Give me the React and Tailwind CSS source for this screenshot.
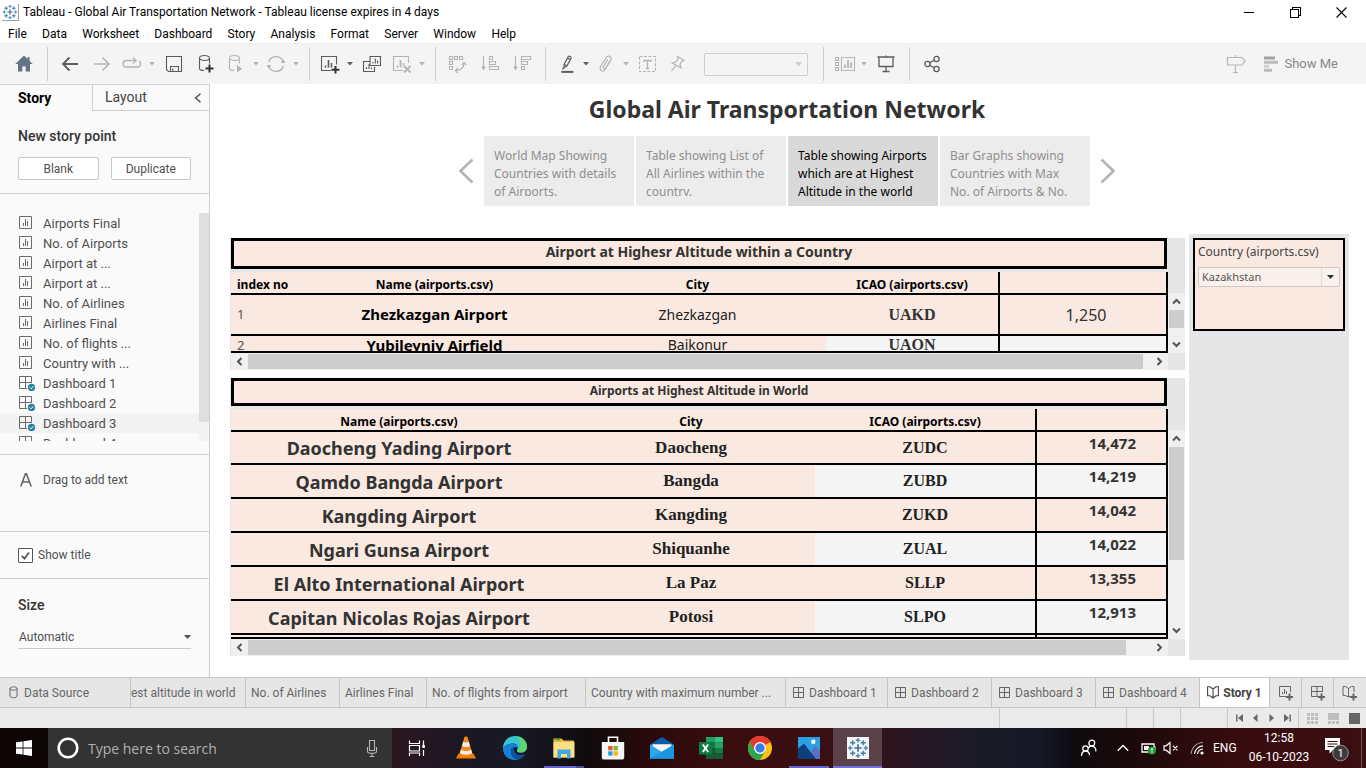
import React from "react";

const UI = "font-['Open_Sans','Noto_Sans',sans-serif]";
const BODY = "font-['Roboto','Noto_Sans',sans-serif]";
const VIZ = "font-['Noto_Sans',sans-serif]";
const SERIF = "font-['Liberation_Serif',serif]";

function Svg({ w = 20, h = 20, children, className = "" }) {
  return (
    <svg width={w} height={h} viewBox={`0 0 ${w} ${h}`} fill="none" stroke="currentColor" className={`block shrink-0 ${className}`} aria-hidden="true">
      {children}
    </svg>
  );
}

/* ---------- window chrome ---------- */

function TableauMark({ size = 16 }) {
  const plus = (x, y, r, c, w) => <path d={`M${x - r} ${y}H${x + r}M${x} ${y - r}V${y + r}`} stroke={c} strokeWidth={w} />;
  return (
    <svg width={size} height={size} viewBox="0 0 24 24" fill="none" aria-hidden="true" className="block shrink-0">
      {plus(12, 12, 4, "#3a6f95", 1.8)}
      {plus(12, 3.5, 2.4, "#4d86ad", 1.5)}
      {plus(12, 20.5, 2.4, "#4d86ad", 1.5)}
      {plus(3.5, 12, 2.4, "#4d86ad", 1.5)}
      {plus(20.5, 12, 2.4, "#4d86ad", 1.5)}
      {plus(6.3, 6.3, 2.8, "#3f7ba3", 1.5)}
      {plus(17.7, 6.3, 2.8, "#3f7ba3", 1.5)}
      {plus(6.3, 17.7, 2.8, "#3f7ba3", 1.5)}
      {plus(17.7, 17.7, 2.8, "#3f7ba3", 1.5)}
    </svg>
  );
}

function TitleBar() {
  const btn = "flex h-5 w-[46px] items-center justify-center text-black";
  return (
    <header className={`flex h-6 items-center bg-white pl-0.5 ${BODY}`}>
      <span className="border-r border-b border-gray-400"><TableauMark /></span>
      <h1 className="ml-1 flex-1 text-[12px] leading-6 text-black">Tableau - Global Air Transportation Network - Tableau license expires in 4 days</h1>
      <div className="mr-0.5 flex">
        <button className={btn} aria-label="Minimize"><Svg w={11} h={11}><path d="M0 5.5H10" shapeRendering="crispEdges" /></Svg></button>
        <button className={btn} aria-label="Restore"><Svg w={11} h={11}><path d="M.5 2.5H8.5V10.5H.5ZM2.5 2.5V.5H10.5V8.5H8.5" shapeRendering="crispEdges" /></Svg></button>
        <button className={btn} aria-label="Close"><Svg w={11} h={11}><path d="M.5 .5L10.5 10.5M10.5 .5L.5 10.5" strokeWidth="1.1" /></Svg></button>
      </div>
    </header>
  );
}

const menus = ["File", "Data", "Worksheet", "Dashboard", "Story", "Analysis", "Format", "Server", "Window", "Help"];

function MenuBar() {
  return (
    <nav className={`h-[19px] bg-white px-2 ${BODY}`}>
      <div className="flex max-w-[508px] justify-between">
        {menus.map((m) => (
          <button key={m} className="text-[12px] leading-5 text-black">{m}</button>
        ))}
      </div>
    </nav>
  );
}

/* ---------- toolbar ---------- */

const dark = "text-[#5c5c5c]";
const dim = "text-[#b4b4b4]";

function Tool({ label, width = "w-8", tone = dim, children }) {
  return <button aria-label={label} className={`flex h-8 items-center justify-center ${width} ${tone}`}>{children}</button>;
}

function Caret({ tone = dim, label }) {
  return (
    <button aria-label={label} className={`flex h-8 w-3 items-center justify-center ${tone}`}>
      <Svg w={6} h={4}><path d="M0 0H6L3 3.6Z" fill="currentColor" stroke="none" /></Svg>
    </button>
  );
}

function Group({ children, pad = "pl-1.5 pr-[7px]" }) {
  return <div className={`flex h-[34px] items-center border-l border-[#d0d0d0] ${pad}`}>{children}</div>;
}

const cylinder = "M3.5 4V14.5C3.5 16 6 16.5 8 16.5M3.5 4C3.5 2.6 5.7 1.5 8.5 1.5S13.5 2.6 13.5 4 11.3 6.5 8.5 6.5 3.5 5.4 3.5 4ZM13.5 4V9.5";

function Toolbar() {
  return (
    <div role="toolbar" className="flex h-[41px] items-center border-t border-[#ececec] bg-[#f4f4f4]">
      <button aria-label="Home" className="flex w-[47px] justify-center text-[#667385]">
        <Svg><path d="M10 1.6L1.2 10H4V17.6H8.3V12.4H11.7V17.6H16V10H18.8L15.6 7V3H13.6V5Z" fill="currentColor" stroke="none" /></Svg>
      </button>
      <Group>
        <Tool label="Undo" tone={dark}><Svg><path d="M18 10H2.5M9.5 3.5L3 10L9.5 16.5" strokeWidth="1.8" /></Svg></Tool>
        <Tool label="Redo"><Svg><path d="M2 10H17.5M10.5 3.5L17 10L10.5 16.5" strokeWidth="1.6" /></Svg></Tool>
        <Tool label="Replay" width="w-7"><Svg><path d="M13 6.5H4C2 6.5 1 8 1 9.7S2 13 4 13H15.5C17.5 13 18.6 11.8 18.6 10C18.6 8.5 18 7.5 17 7M11 3.5L14 6.5L11 9.5" strokeWidth="1.4" /></Svg></Tool>
        <Caret label="Replay options" />
        <Tool label="Save" tone={dark}><Svg><path d="M2.5 2.5H17.5V17.5H4.5L2.5 15.5ZM6.5 17.5V12.5H14.5V17.5M8.8 17V14.5" strokeWidth="1.1" /></Svg></Tool>
        <Tool label="New Data Source" tone={dark}><Svg><path d={cylinder} strokeWidth="1.1" /><path d="M13.5 10.5V18.5M9.5 14.5H17.5" stroke="#333" strokeWidth="2" /></Svg></Tool>
        <Tool label="Pause Auto Updates" width="w-7"><Svg><path d={cylinder} strokeWidth="1.1" /><path d="M11 11L16 14.8L11 18.6Z" fill="currentColor" stroke="none" /></Svg></Tool>
        <Caret label="Update options" />
        <Tool label="Run Update" width="w-7"><Svg><path d="M2.6 8C3.5 4.8 6.5 2.6 10 2.6C13 2.6 15.6 4.2 17 7M17.4 12C16.5 15.2 13.5 17.4 10 17.4C7 17.4 4.4 15.8 3 13" strokeWidth="1.3" /><path d="M14.5 9H19.5L17.5 5.5ZM.5 11H5.5L2.6 14.5Z" fill="currentColor" stroke="none" /></Svg></Tool>
        <Caret label="Run options" />
      </Group>
      <Group>
        <Tool label="New Worksheet" width="w-7" tone={dark}><Svg><path d="M11 16.5H1.5V2.5H16.5V10.5" strokeWidth="1.1" /><path d="M5.5 13.5V11.5M8.5 13.5V6M11.5 13.5V9" strokeWidth="1.6" /><path d="M15.5 12V19.5M11.5 15.7H19.5" stroke="#333" strokeWidth="2" /></Svg></Tool>
        <Caret label="New sheet options" tone={dark} />
        <Tool label="Duplicate" tone={dark}><Svg><path d="M8.5 7.5H1.5V17.5H12.5V13" strokeWidth="1.1" /><path d="M8 2.5H18.5V11.5H8Z" strokeWidth="1.1" /><path d="M11 9.5V8M13.3 9.5V4.5M15.6 9.5V6.5M4.5 15V13M7 15V10M9.5 15V13.5" strokeWidth="1.1" /></Svg></Tool>
        <Tool label="Clear Sheet" width="w-7"><Svg><path d="M11 16.5H1.5V2.5H16.5V9" strokeWidth="1.1" /><path d="M5.5 13.5V11.5M8.5 13.5V6M11.5 11.5V9" strokeWidth="1.7" /><path d="M12 12L18.5 18.5M18.5 12L12 18.5" strokeWidth="1.8" /></Svg></Tool>
        <Caret label="Clear options" />
      </Group>
      <Group>
        <Tool label="Swap Rows and Columns"><Svg><path d="M1.5 2.5H4.5V5.5H1.5ZM6.5 2.5H9.5V5.5H6.5ZM11.5 2.5H14.5V5.5H11.5ZM1.5 7.5H4.5V10.5H1.5ZM1.5 12.5H4.5V15.5H1.5ZM7.5 16.5C12 16.5 16 14 16 9.5M13.5 11L16 8.5L18.5 11M9.8 14L7.3 16.5L9.8 19" strokeWidth="1.1" /></Svg></Tool>
        <Tool label="Sort Ascending"><Svg><path d="M3.5 2V14M9.5 2.5H12.5V5.5H9.5ZM9.5 7.5H15.5V10.5H9.5ZM9.5 12.5H18.5V15.5H9.5Z" strokeWidth="1.1" /><path d="M1 12.5H6L3.5 16.5Z" fill="currentColor" stroke="none" /></Svg></Tool>
        <Tool label="Sort Descending"><Svg><path d="M3.5 2V14M9.5 2.5H18.5V5.5H9.5ZM9.5 7.5H15.5V10.5H9.5ZM9.5 12.5H12.5V15.5H9.5Z" strokeWidth="1.1" /><path d="M1 12.5H6L3.5 16.5Z" fill="currentColor" stroke="none" /></Svg></Tool>
      </Group>
      <Group pad="pl-1.5 pr-[15px]">
        <Tool label="Highlight" width="w-7" tone={dark}><Svg><path d="M8.2 10.2L12.4 2.4C13 1.6 15.6 3 15.2 4L11 11.9L7.6 14.2ZM8.2 10.2L11 11.9M11.6 4L14.4 5.6M6.2 15.4L7.6 14.2" strokeWidth="1.2" /><path d="M5.4 17.9H17.4" strokeWidth="2" /></Svg></Tool>
        <Caret label="Highlight options" tone={dark} />
        <Tool label="Group Members" width="w-7"><Svg><path d="M13.8 7L9.5 14.5C8.5 16.6 7 17.6 5.4 16.8C3.8 16 3.8 14 4.8 12.2L9.8 4C11 2 12.8 1.8 14 2.6C15.5 3.5 15.5 5 14.4 7L10.2 13.8C9.4 15 8.6 15.2 7.8 14.8C7 14.3 7 13.4 7.6 12.4L11.8 5.4" strokeWidth="1.2" /></Svg></Tool>
        <Caret label="Group options" />
        <Tool label="Show Mark Labels"><Svg><path d="M1.5 2.5H17.5V17.5H1.5Z" strokeDasharray="3 1.5" strokeWidth="1.1" /><path d="M6 8V6.5H13V8M9.5 6.5V14.5M8 14.5H11" strokeWidth="1.3" /></Svg></Tool>
        <Tool label="Fix Axes" width="w-7"><Svg><path d="M9.5 2.5L16 6.3L13.6 7.2L12 10.2L13 14L4.2 9L8.2 7.8L10 4.9ZM8 11.4L3.5 16.8" strokeWidth="1.2" /></Svg></Tool>
        <label className="ml-3 flex w-[104px] items-center rounded-xs border border-[#cfcfcf] text-[#cfcfcf]">
          <span className="sr-only">Fit</span>
          <select disabled className="h-[21px] w-full appearance-none bg-transparent" />
          <Svg w={7} h={5} className="mr-[5px]"><path d="M0 0H7L3.5 4.5Z" fill="currentColor" stroke="none" /></Svg>
        </label>
      </Group>
      <Group pad="pl-2 pr-[7px]">
        <Tool label="Show or Hide Cards" width="w-[26px]"><Svg><path d="M.5 3.5H3.5V6.5H.5ZM.5 8.5H3.5V11.5H.5ZM.5 13.5H3.5V16.5H.5ZM6.5 3.5H19.5V16.5H6.5Z" strokeWidth="1.1" /><path d="M10 14V10.5M13 14V6M16 14V8.5" strokeWidth="1.8" /></Svg></Tool>
        <Caret label="Card options" />
        <Tool label="Presentation Mode" tone={dark}><Svg><path d="M1.5 3H18.5M10 1.5V3M6.5 17.5H13.5M10 13V17.5" strokeWidth="1.3" /><path d="M3 3V12.5H17V3" strokeWidth="1.3" /></Svg></Tool>
      </Group>
      <Group>
        <Tool label="Share" tone={dark}><Svg><circle cx="5.5" cy="10" r="2.6" strokeWidth="1.3" /><circle cx="14.5" cy="5" r="2.6" strokeWidth="1.3" /><circle cx="14.5" cy="15" r="2.6" strokeWidth="1.3" /><path d="M7.8 8.7L12.2 6.3M7.8 11.3L12.2 13.7" strokeWidth="1.3" /></Svg></Tool>
      </Group>
      <div className={`mr-7 ml-auto flex items-center ${BODY}`}>
        <Tool label="Data Guide"><Svg><path d="M9.5 1V3M9.5 11.5V18.5M7 18.5H12" strokeWidth="1.2" /><path d="M1.5 3.5H16L19 7.2L16 11H1.5Z" strokeWidth="1.2" /></Svg></Tool>
        <button className="ml-3 flex items-center gap-1.5 text-[13px] text-[#888]">
          <Svg w={14} h={16} ><path d="M0 2H11" stroke="#a2a2a2" strokeWidth="3" /><path d="M0 6.2H14M0 14.2H8" stroke="#bcbcbc" strokeWidth="3" /><path d="M0 10.2H5" stroke="#d0d0d0" strokeWidth="3" /></Svg>
          Show Me
        </button>
      </div>
    </div>
  );
}

/* ---------- sidebar ---------- */

function SheetIcon() {
  return <Svg w={16} h={16} className="text-[#6b6b6b]"><path d="M1.5 1.5H13.5V13.5H1.5Z" /><path d="M5.5 11V8M7.5 11V4M9.5 11V6" strokeWidth="1" /></Svg>;
}
function DashIcon() {
  return (
    <Svg w={18} h={16} className="text-[#6b6b6b]">
      <path d="M9 13.5H1.5V1.5H13.5V8M7.5 1.5V13.5M1.5 7.5H13.5" />
      <circle cx="13.5" cy="12.4" r="3.6" fill="#2f7fa3" stroke="none" />
      <path d="M11.8 12.5L13.1 13.8L15.3 11.3" stroke="#fff" strokeWidth="1" />
    </Svg>
  );
}

const sheets = ["Airports Final", "No. of Airports", "Airport at ...", "Airport at ...", "No. of Airlines", "Airlines Final", "No. of flights ...", "Country with ..."];
const dashboards = ["Dashboard 1", "Dashboard 2", "Dashboard 3", "Dashboard 4"];

function Sidebar() {
  return (
    <aside className={`w-[210px] shrink-0 border-r border-[#cfcfcf] bg-[#fafafa] text-[13px] text-[#505050] ${BODY}`}>
      <div role="tablist" className="flex h-[27px] border-t border-[#d4d4d4]">
        <button role="tab" aria-selected="true" className="w-[92px] pl-[18px] text-left text-[14px] font-bold text-black">Story</button>
        <button role="tab" aria-selected="false" className="flex flex-1 items-center justify-between border-b border-l border-[#cfcfcf] pr-[7px] pl-3 text-[14px] text-[#444]">
          Layout
          <Svg w={8} h={10}><path d="M6.5 .8L1.5 5L6.5 9.2" strokeWidth="1.3" /></Svg>
        </button>
      </div>
      <section className="border-b border-[#cfcfcf] px-[18px] pt-[15px] pb-[13px]">
        <h2 className="text-[14px] leading-5 font-medium text-[#333]">New story point</h2>
        <div className="mt-[11px] flex gap-3 text-[12px]">
          <button className="h-[23px] flex-1 rounded-xs border border-[#c8c8c8] bg-white">Blank</button>
          <button className="h-[23px] flex-1 rounded-xs border border-[#c8c8c8] bg-white">Duplicate</button>
        </div>
      </section>
      <section className="border-b border-[#cfcfcf] pt-[19px] pb-[13px]">
        <div className="flex h-[228px] overflow-hidden">
          <ul className="flex-1">
            {sheets.map((s, i) => (
              <li key={i} className="flex h-5 items-center gap-2 pl-[18px]"><SheetIcon /><span className="pt-px pl-px">{s}</span></li>
            ))}
            {dashboards.map((s) => (
              <li key={s} className={`flex h-5 items-center gap-[7px] pl-[18px] ${s === "Dashboard 3" ? "bg-[#f3f3f3]" : ""}`}><DashIcon /><span className="pt-px">{s}</span></li>
            ))}
          </ul>
          <div className="h-full w-2.5 bg-[#f3f3f3]"><div className="h-[209px] bg-[#dfdfdf]" /></div>
        </div>
      </section>
      <section className="flex h-[77px] gap-[11px] border-b border-[#cfcfcf] pt-[13px] pl-5">
        <Svg w={12} h={14} className="mt-[5px] text-[#666]"><path d="M.8 13.5L5.4 .8H6.4L11.2 13.5M2.6 9H9.4" strokeWidth="1.6" /></Svg>
        <p className="text-[12px] leading-6">Drag to add text</p>
      </section>
      <section className="flex h-[47px] items-center border-b border-[#cfcfcf] pl-[18px]">
        <label className="flex items-center gap-[5px] text-[12px]">
          <span className="grid">
            <input type="checkbox" defaultChecked className="peer col-start-1 row-start-1 size-[15px] appearance-none rounded-[1px] border border-[#555] bg-white" />
            <Svg w={15} h={15} className="pointer-events-none col-start-1 row-start-1 text-[#555]"><path d="M3.8 7.8L6.5 10.6L11 4.4" strokeWidth="1.7" /></Svg>
          </span>
          Show title
        </label>
      </section>
      <section className="px-[18px] pt-4">
        <label htmlFor="size" className="block text-[14px] leading-5 font-medium text-[#333]">Size</label>
        <div className="mt-2.5 flex h-6 items-center border-b border-[#c8c8c8]">
          <select id="size" defaultValue="Automatic" className="flex-1 appearance-none bg-transparent pl-px text-[12px]"><option>Automatic</option></select>
          <Svg w={7} h={4}><path d="M0 0H7L3.5 4Z" fill="currentColor" stroke="none" /></Svg>
        </div>
      </section>
    </aside>
  );
}

/* ---------- story ---------- */

const points = [
  "World Map Showing Countries with details of Airports.",
  "Table showing List of All Airlines within the country.",
  "Table showing Airports which are at Highest Altitude in the world",
  "Bar Graphs showing Countries with Max No. of Airports & No.",
];

function StoryNav() {
  return (
    <div className="flex items-center justify-center gap-2.5">
      <button aria-label="Previous" className="text-[#b3b3b3]"><Svg w={16} h={26}><path d="M14.5 1.5L2.5 13L14.5 24.5" strokeWidth="2.6" /></Svg></button>
      <div className="flex gap-0.5">
        {points.map((p, i) => (
          <button key={p} className={`h-[70px] w-[150px] overflow-hidden px-2.5 py-[11px] text-left text-[12px] leading-[18px] ${i === 2 ? "bg-[#d9d9d9] text-black" : "bg-[#ececec] text-[#8f8f8f]"}`}>
            <span className="block h-[49px] overflow-hidden">{p}</span>
          </button>
        ))}
      </div>
      <button aria-label="Next" className="text-[#b3b3b3]"><Svg w={16} h={26}><path d="M1.5 1.5L13.5 13L1.5 24.5" strokeWidth="2.6" /></Svg></button>
    </div>
  );
}

const arrows = {
  up: "M1 6.5L4.5 3L8 6.5",
  down: "M1 2.5L4.5 6L8 2.5",
  left: "M6.5 1L3 4.5L6.5 8",
  right: "M2.5 1L6 4.5L2.5 8",
};
function ScrollButton({ dir }) {
  return (
    <button aria-label={`Scroll ${dir}`} className="flex size-[17px] shrink-0 items-center justify-center text-[#555]">
      <Svg w={9} h={9}><path d={arrows[dir]} strokeWidth="2" /></Svg>
    </button>
  );
}

function Sheet({ title, titleClass, head, body, bodyHeight, thumbHeight, thumbEnd, cols }) {
  return (
    <section className="border-l border-[#e6e6e6] bg-[#e6e6e6]">
      <h3 className={`mr-[18px] border-[3px] border-black bg-[#f9e9e0] text-center font-bold text-[#333] ${titleClass}`}>{title}</h3>
      <div className="mt-[3px] flex">
        <div className="min-w-0 flex-1">
          <div className={`overflow-hidden border-b-2 border-black ${bodyHeight}`}>
            <table className="w-full table-fixed border-collapse bg-[#f9e9e0]">
              {cols}
              {head}
              {body}
            </table>
          </div>
          <div className="flex h-[17px] items-center bg-[#f0f0f0]">
            <ScrollButton dir="left" />
            <div className="h-[15px] flex-1 bg-[#cdcdcd]" />
            <div className={thumbEnd} />
            <ScrollButton dir="right" />
          </div>
        </div>
        <div className="flex w-[17px] flex-col pt-[21px] pb-[17px]">
          <div className="flex flex-1 flex-col bg-[#f0f0f0]">
            <ScrollButton dir="up" />
            <div className={`mx-px bg-[#cdcdcd] ${thumbHeight}`} />
            <div className="flex-1" />
            <ScrollButton dir="down" />
          </div>
        </div>
      </div>
    </section>
  );
}

const th = "h-[22px] border-b-2 border-black p-0 text-[12px] leading-4 font-bold text-black";
const thText = "block pt-1";

function CountrySheet() {
  const rows = [
    ["1", "Zhezkazgan Airport", "Zhezkazgan", "UAKD", "1,250"],
    ["2", "Yubileyniy Airfield", "Baikonur", "UAON", ""],
  ];
  return (
    <Sheet
      title="Airport at Highesr Altitude within a Country"
      titleClass="h-[31px] text-[14px] leading-[22px]"
      bodyHeight="h-[81px]"
      thumbHeight="h-[18px]"
      thumbEnd="w-2"
      cols={<colgroup><col className="w-[69px]" /><col /><col className="w-[257px]" /><col className="w-[173px]" /><col className="w-[168px]" /></colgroup>}
      head={
        <thead><tr>
          <th className={`${th} text-left whitespace-nowrap`}><span className={`${thText} pl-1.5`}>index no</span></th>
          <th className={th}><span className={thText}>Name (airports.csv)</span></th>
          <th className={th}><span className={thText}>City</span></th>
          <th className={`${th} border-r-2`}><span className={thText}>ICAO (airports.csv)</span></th>
          <th className={`${th} border-r-2`} aria-label="Altitude" />
        </tr></thead>
      }
      body={
        <tbody>
          {rows.map((r, i) => {
            const cell = i === 0 ? "h-[41px] border-b-2 border-black p-0 text-center align-middle" : "h-[41px] p-0 text-center align-top leading-[18px]";
            const band = i === 1 ? "bg-[#f5f5f5]" : "";
            return (
              <tr key={r[0]}>
                <td className={`${cell} text-[13px] text-[#555]`}><span className="block pl-1.5 text-left">{r[0]}</span></td>
                <td className={`${cell} text-[15px] font-bold text-black`}>{r[1]}</td>
                <td className={`${cell} text-[14px] text-[#222]`}>{r[2]}</td>
                <td className={`${cell} ${band} border-r-2 border-black text-[16px] font-bold text-[#333] ${SERIF}`}>{r[3]}</td>
                <td className={`${cell} ${band} border-r-2 border-black text-[16px] text-[#333]`}><span className="block pl-1.5">{r[4]}</span></td>
              </tr>
            );
          })}
        </tbody>
      }
    />
  );
}

function WorldSheet() {
  const rows = [
    ["Daocheng Yading Airport", "Daocheng", "ZUDC", "14,472"],
    ["Qamdo Bangda Airport", "Bangda", "ZUBD", "14,219"],
    ["Kangding Airport", "Kangding", "ZUKD", "14,042"],
    ["Ngari Gunsa Airport", "Shiquanhe", "ZUAL", "14,022"],
    ["El Alto International Airport", "La Paz", "SLLP", "13,355"],
    ["Capitan Nicolas Rojas Airport", "Potosi", "SLPO", "12,913"],
  ];
  return (
    <Sheet
      title="Airports at Highest Altitude in World"
      titleClass="h-[28px] text-[12px] leading-[19px]"
      bodyHeight="h-[230px]"
      thumbHeight="h-[113px]"
      thumbEnd="w-[25px]"
      cols={<colgroup><col /><col className="w-[248px]" /><col className="w-[221px]" /><col className="w-[131px]" /></colgroup>}
      head={
        <thead><tr>
          <th className={th}><span className={thText}>Name (airports.csv)</span></th>
          <th className={th}><span className={thText}>City</span></th>
          <th className={`${th} border-r-2`}><span className={thText}>ICAO (airports.csv)</span></th>
          <th className={`${th} border-r-2`} aria-label="Altitude" />
        </tr></thead>
      }
      body={
        <tbody>
          {rows.map((r, i) => {
            const cell = `${i === 0 ? "h-[33px]" : "h-[34px]"} border-b-2 border-black p-0 text-center`;
            const band = i % 2 ? "bg-[#f5f5f5]" : "";
            return (
              <tr key={r[0]}>
                <td className={`${cell} text-[18px] font-bold text-[#333]`}><span className="block pt-0.5">{r[0]}</span></td>
                <td className={`${cell} text-[17px] font-bold text-[#222] ${SERIF}`}>{r[1]}</td>
                <td className={`${cell} ${band} border-r-2 text-[16px] font-bold text-[#222] ${SERIF}`}>{r[2]}</td>
                <td className={`${cell} ${band} border-r-2 align-top text-[15px] leading-[22px] font-bold text-[#333]`}><span className="block pr-[30px] text-right">{r[3]}</span></td>
              </tr>
            );
          })}
          <tr><td colSpan={2} className="h-4 p-0" /><td className="border-r-2 border-black p-0" /><td className="border-r-2 border-black p-0" /></tr>
        </tbody>
      }
    />
  );
}

function Story() {
  return (
    <main className={`min-w-0 flex-1 bg-white pr-[17px] pl-5 ${VIZ}`}>
      <div className="pr-[5px]">
        <h2 className="pt-[7px] pb-[9px] text-center text-[23px] leading-9 font-bold text-[#333]">Global Air Transportation Network</h2>
        <StoryNav />
      </div>
      <div className="mt-7 flex gap-1">
        <div className="flex min-w-0 flex-1 flex-col gap-2 pt-1">
          <CountrySheet />
          <WorldSheet />
        </div>
        <div className="h-[426px] w-40 bg-[#e6e6e6] p-1">
          <div className="h-[93px] w-[152px] border-2 border-black bg-[#f9e9e0] px-[3px]">
            <label htmlFor="country" className="block pt-0.5 text-[12px] leading-5 whitespace-nowrap text-[#444]">Country (airports.csv)</label>
            <div className="mt-[5px] flex h-5 items-center rounded-xs border border-[#cfc8c4] bg-[#faf1ec]">
              <select id="country" defaultValue="Kazakhstan" className="min-w-0 flex-1 appearance-none pl-[3px] text-[11px] text-[#555]"><option>Kazakhstan</option></select>
              <span className="flex h-full w-[18px] items-center justify-center border-l border-[#e2dad5] text-[#333]"><Svg w={7} h={4}><path d="M0 0H7L3.5 4Z" fill="currentColor" stroke="none" /></Svg></span>
            </div>
          </div>
        </div>
      </div>
    </main>
  );
}

/* ---------- sheet tabs + status ---------- */

function GridGlyph() {
  return <Svg w={12} h={12}><path d="M.5 .5H10.5V10.5H.5ZM5.5 .5V10.5M.5 5.5H10.5" /></Svg>;
}
function BookGlyph() {
  return <Svg w={12} h={13}><path d="M.6 .8H3L6 3L9 .8H11.4V9.8H9L6 12L3 9.8H.6ZM6 3V12" strokeWidth="1.1" /></Svg>;
}

function SheetTabs() {
  const tab = "flex items-center border-l border-[#c4c4c4] shrink-0 whitespace-nowrap";
  return (
    <nav className={`flex h-[30px] border-t border-[#c4c4c4] bg-[#e6e6e6] text-[12px] text-[#666] ${BODY}`}>
      <button className="flex w-[130px] shrink-0 items-center gap-[5px] pl-[9px]">
        <Svg w={10} h={13}><path d="M1 2.5C1 .3 8 .3 8 2.5V10C8 12.2 1 12.2 1 10ZM1 2.5C1 4.7 8 4.7 8 2.5" /></Svg>
        Data Source
      </button>
      <button className={`${tab} w-[115px]`}>est altitude in world</button>
      <button className={`${tab} w-[94px] pl-[5px]`}>No. of Airlines</button>
      <button className={`${tab} w-[87px] pl-[5px]`}>Airlines Final</button>
      <button className={`${tab} w-[159px] pl-[5px]`}>No. of flights from airport</button>
      <button className={`${tab} w-[200px] pl-[5px]`}>Country with maximum number ...</button>
      {dashboards.map((d) => (
        <button key={d} className={`${tab} gap-1 pl-[7px] ${d === "Dashboard 1" ? "w-[102px]" : "w-[104px]"}`}><GridGlyph />{d}</button>
      ))}
      <button className={`${tab} w-[70px] justify-center gap-1 bg-white font-bold text-[#444]`}><BookGlyph />Story 1</button>
      <button className={`${tab} w-8 justify-center`} aria-label="New Worksheet"><Svg w={16} h={16}><path d="M8 11.5H1.5V1.5H12.5V7M4.5 9V7M6.5 9V4M8.5 9V6" /><path d="M11.5 8.5V15.5M8 12H15" strokeWidth="2" /></Svg></button>
      <button className={`${tab} w-8 justify-center`} aria-label="New Dashboard"><Svg w={16} h={16}><path d="M8 11.5H1.5V1.5H12.5V7M7 1.5V11.5M1.5 6.5H12.5" /><path d="M11.5 8.5V15.5M8 12H15" strokeWidth="2" /></Svg></button>
      <button className={`${tab} w-8 justify-center`} aria-label="New Story"><Svg w={16} h={16}><path d="M8 11L6.5 12L3.5 10.5H1V1.5H3.5L6.5 3.5L9.5 1.5H12V7M6.5 3.5V12" /><path d="M11.5 8.5V15.5M8 12H15" strokeWidth="2" /></Svg></button>
    </nav>
  );
}

function StatusBar() {
  const cell = "h-full border-l border-[#c8c8c8]";
  const nav = "flex w-4 items-center justify-center";
  return (
    <footer className="flex h-[21px] items-center justify-end border-t border-[#c8c8c8] bg-[#eaeaea] text-[#666]">
      <div className={`${cell} w-[127px]`} />
      <div className={`${cell} w-[27px]`} />
      <div className={`${cell} w-[27px]`} />
      <div className={`${cell} w-[47px]`} />
      <div className={`${cell} flex w-[71px] items-center pl-[3px]`}>
        <button className={nav} aria-label="First"><Svg w={7} h={8}><path d="M.8 .5V7.5" strokeWidth="1.4" /><path d="M7 0V8L2 4Z" fill="currentColor" stroke="none" /></Svg></button>
        <button className={nav} aria-label="Previous sheet"><Svg w={7} h={8}><path d="M5.5 0V8L1 4Z" fill="currentColor" stroke="none" /></Svg></button>
        <button className={nav} aria-label="Next sheet"><Svg w={7} h={8}><path d="M1.5 0V8L6 4Z" fill="currentColor" stroke="none" /></Svg></button>
        <button className={nav} aria-label="Last"><Svg w={7} h={8}><path d="M6.2 .5V7.5" strokeWidth="1.4" /><path d="M0 0V8L5 4Z" fill="currentColor" stroke="none" /></Svg></button>
      </div>
      <div className={`${cell} flex items-center gap-2.5 pr-1.5 pl-2`}>
        <button aria-label="Sheet sorter"><Svg w={11} h={11} className="text-[#bdbdbd]"><path d="M0 1.5H11M0 5.5H11M0 9.5H11" strokeWidth="3" strokeDasharray="3 1" /></Svg></button>
        <button aria-label="Filmstrip"><Svg w={11} h={11} className="text-[#bdbdbd]"><path d="M0 3.5H11" strokeWidth="7" /><path d="M0 9.5H11" strokeWidth="3" strokeDasharray="3 1" /></Svg></button>
        <button aria-label="Tabs"><Svg w={11} h={11} className="text-[#666]"><path d="M0 5.5H11" strokeWidth="11" /></Svg></button>
      </div>
    </footer>
  );
}

/* ---------- taskbar ---------- */

function App24({ children }) {
  return <svg width="24" height="24" viewBox="0 0 24 24" fill="none" className="block" aria-hidden="true">{children}</svg>;
}

const apps = [
  ["Task View", "", <App24 key="i"><path d="M4.5 4.5V7.5H14.5V4.5M4.5 20V17H14.5V20M4.5 9.5H14.5V15H4.5ZM18.5 4.5V9M18.5 14V20" stroke="#fff" strokeWidth="1.2" /><path d="M17.3 9H19.9V12H17.3Z" fill="#fff" /></App24>],
  ["VLC media player", "", <App24 key="i"><path d="M4.5 17.5H19.5L22 22.5H2Z" fill="#f07c00" /><path d="M10.3 1.5C10.8 .3 13.2 .3 13.7 1.5L18.5 18C16 20.5 8 20.5 5.5 18Z" fill="#f58a12" /><path d="M9.2 5.8L8 10C10 11.4 14 11.4 16 10L14.8 5.8C13.5 6.8 10.5 6.8 9.2 5.8ZM6.9 13.6L5.9 17C8.8 19.2 15.2 19.2 18.1 17L17.1 13.6C14.5 15.6 9.5 15.6 6.9 13.6Z" fill="#ececec" /></App24>],
  ["Microsoft Edge", "", <App24 key="i"><path d="M12 0C18.8 0 24 5 24 10.5C24 14.5 21 16.6 17.8 16.6C14.5 16.6 13.3 15 14.2 13.6C15.6 11.3 14 7.6 9.8 7.6C4.6 7.6 1 10.6 0 13C-.3 5.6 5 0 12 0Z" fill="#36c5d0" /><path d="M14 .2C20 1 24 5.5 24 10.5C24 14.5 21 16.6 17.8 16.6C14.8 16.6 13.5 15.2 14.1 14C18 13 20 7 14 .2Z" fill="#5fd668" /><path d="M0 12.5C.8 9.5 4.5 7.6 9.3 7.6C12.6 7.8 14.8 10 14.6 12.4C12 9.5 8 11.6 8 15.4C8 19.4 11 23 15.5 23.4C7 26 0 20 0 12.5Z" fill="#1680d8" /><path d="M8 15.4C8 12.8 9.8 10.9 11.8 10.9C10 15 13 19 17.6 19C19.6 19 21.4 18.4 22.4 17.8C20.8 21.4 17.6 23.6 14.5 23.4C10.8 22.8 8 19.4 8 15.4Z" fill="#11509e" /></App24>],
  ["File Explorer", "split", <App24 key="i"><path d="M1.5 2.5H9.5L11.5 4.5H22V21.5H1.5Z" fill="#e9b93c" /><path d="M1.5 6H22.5V21.5H1.5Z" fill="#fddf86" /><path d="M3.5 3.5H8" stroke="#36a852" strokeWidth="1.5" /><path d="M5.5 22.5V13.5H18.5V22.5H15V18H9V22.5Z" fill="#3fa9e0" /></App24>],
  ["Microsoft Store", "", <App24 key="i"><path d="M7.5 7V1.3H16.5V7" stroke="#fff" strokeWidth="1.6" /><path d="M.8 6H23.2V21.2C23.2 22.6 22.4 23.5 21 23.5H3C1.6 23.5 .8 22.6 .8 21.2Z" fill="#f5f5f5" /><path d="M7.2 10H11.5V14.3H7.2Z" fill="#e94f2a" /><path d="M12.5 10H16.8V14.3H12.5Z" fill="#7cb928" /><path d="M7.2 15.3H11.5V19.6H7.2Z" fill="#1a9fe8" /><path d="M12.5 15.3H16.8V19.6H12.5Z" fill="#f7b514" /></App24>],
  ["Mail", "", <App24 key="i"><path d="M0 8.5L12 1L24 8.5V22.5H0Z" fill="#0b5ca8" /><path d="M2.5 8.5H21.5V15L12 20L2.5 15Z" fill="#f4f4f4" /><path d="M0 8.5L12 16L24 8.5V22.5H0Z" fill="#2ea8ec" /><path d="M2 8.5H22L12 15.5Z" fill="#f4f4f4" /><path d="M0 22.5L24 8.5V22.5Z" fill="#1f95e0" /></App24>],
  ["Excel", "", <App24 key="i"><path d="M7 1H15.5V6.6H7Z" fill="#21a366" /><path d="M15.5 1H24V6.6H15.5Z" fill="#33c481" /><path d="M7 6.6H15.5V12H7Z" fill="#107c41" /><path d="M15.5 6.6H24V12H15.5Z" fill="#21a366" /><path d="M7 12H15.5V23H7Z" fill="#185c37" /><path d="M15.5 12H24V17.5H15.5Z" fill="#107c41" /><path d="M15.5 17.5H24V23H15.5Z" fill="#185c37" /><path d="M0 6H13V18.5H0Z" fill="#107c41" /><path d="M3.8 8.5L9.2 16M9.2 8.5L3.8 16" stroke="#fff" strokeWidth="1.9" /></App24>],
  ["Chrome", "", <App24 key="i"><circle cx="12" cy="12" r="12" fill="#fbc116" /><path d="M12 12L1.6 6A12 12 0 0 1 22.4 6Z" fill="#e33b2e" /><path d="M12 6H22.4A12 12 0 0 0 1.6 6L6.8 15Z" fill="#e33b2e" /><path d="M1.6 6A12 12 0 0 0 12 24L17.2 15L6.8 15Z" fill="#2da44e" /><circle cx="12" cy="12" r="6" fill="#fff" /><circle cx="12" cy="12" r="4.7" fill="#3a7de8" /></App24>],
  ["Photos", "on", <App24 key="i"><path d="M1 1H23V23H1Z" fill="#2ba0e6" /><path d="M11 23L17.5 9.5L23 14.5V23Z" fill="#5a6fc4" /><path d="M1 12.5L7 7.5L19 23H1Z" fill="#0d3f7d" /><circle cx="16.3" cy="5.8" r="2.2" fill="#fff" /></App24>],
  ["Tableau", "active", <span key="i" className="block bg-[#f4f6f8]"><TableauMark size={22} /></span>],
];

function Taskbar() {
  const light = "text-white";
  return (
    <footer className={`flex h-10 items-stretch text-[12px] text-white ${UI} bg-[linear-gradient(90deg,#0b0505_0px,#0e0606_48px,#2b1620_392px,#191824_470px,#171925_520px,#110a0c_590px,#2a0a0b_650px,#390d0e_720px,#391015_860px,#2a1520_900px,#1b1a27_970px,#161826_1040px,#0d0b0e_1075px,#1d090a_1140px,#370c0e_1230px,#3a0f12_1366px)]`}>
      <button aria-label="Start" className="flex w-12 items-center justify-center">
        <Svg w={16} h={16}><path d="M0 2.3L6.6 1.4V7.6H0ZM7.4 1.3L16 0V7.6H7.4ZM0 8.4H6.6V14.6L0 13.7ZM7.4 8.4H16V16L7.4 14.7Z" fill="#fff" stroke="none" /></Svg>
      </button>
      <label className="flex w-[344px] items-center bg-[#333] pr-3 pl-2">
        <Svg w={24} h={24} className={light}><circle cx="12" cy="12" r="9.3" strokeWidth="2.6" /></Svg>
        <span className="sr-only">Search</span>
        <input type="text" placeholder="Type here to search" className="min-w-0 flex-1 bg-transparent pl-2 text-[14px] outline-none placeholder:text-[#b0b0b0]" />
        <Svg w={16} h={20} className="text-[#b5b5b5]"><path d="M5.5 2.5H10.5V12.5H5.5ZM3.5 9V13.5C3.5 16 12.5 16 12.5 13.5V9M8 15.5V18.5M5.5 18.5H10.5" strokeWidth="1.1" /></Svg>
      </label>
      {apps.map(([name, state, icon]) => (
        <button key={name} aria-label={name} className={`flex w-[49px] flex-col items-center ${state === "active" ? "bg-[#5b4149]" : ""}`}>
          <span className="flex flex-1 items-center justify-center pt-0.5">{icon}</span>
          <span className={`flex h-0.5 ${state === "active" ? "w-full bg-[#7272dc]" : state ? "w-10 bg-[#6464cc]" : ""}`}>
            {state === "split" && <span className="ml-auto w-2 bg-[#4c4a94]" />}
          </span>
        </button>
      ))}
      <div className={`ml-auto flex items-center ${BODY}`}>
        <button aria-label="People" className="w-[37px]"><Svg w={18} h={18} ><path d="M1.5 17C1.5 10.5 9.5 10.5 9.5 16M8.5 9C10 5.5 16.5 7 15.8 12.5" strokeWidth="1.3" /><circle cx="5.5" cy="9.5" r="2.7" strokeWidth="1.3" /><circle cx="11.8" cy="4" r="2.9" strokeWidth="1.3" /></Svg></button>
        <button aria-label="Show hidden icons" className="w-6"><Svg w={12} h={8}><path d="M.8 6.8L6 1.5L11.2 6.8" strokeWidth="1.3" /></Svg></button>
        <button aria-label="Battery" className="w-[22px]"><Svg w={16} h={14}><path d="M1 3H13V11H1ZM14 5.5V8.5" strokeWidth="1.3" /><path d="M3 5H8V9H3Z" fill="#fff" stroke="none" /><circle cx="11" cy="9.5" r="4" fill="#1a9a3c" stroke="none" /><path d="M11 7V12M9.8 8.5L11 7.3L12.2 8.5" stroke="#fff" strokeWidth=".9" /></Svg></button>
        <button aria-label="Volume muted" className="w-[27px]"><Svg w={16} h={14}><path d="M1 4.8H3.2L7 1.5V12.5L3.2 9.2H1ZM10 4.8L14.5 9.3M14.5 4.8L10 9.3" strokeWidth="1.2" /></Svg></button>
        <button aria-label="Network" className="w-[23px]"><Svg w={14} h={14}><path d="M1.2 13A12 12 0 0 1 13 1.5" stroke="#999" strokeWidth="1.1" /><path d="M4.5 13A9 9 0 0 1 13 4.8M7.5 13A6 6 0 0 1 13 8" strokeWidth="1.2" /><circle cx="12" cy="12" r="1.6" fill="#fff" stroke="none" /></Svg></button>
        <button className="w-[34px] text-left text-[12px]">ENG</button>
        <button className="w-16 text-center text-[12px] leading-[19px]">12:58<br />06-10-2023</button>
        <button aria-label="Notifications" className="ml-[14px] w-[36px]">
          <Svg w={28} h={28}><path d="M0 4H15V16H8L4.5 19.5V16H0Z" fill="#fff" stroke="none" /><path d="M2.5 7.5H12.5M2.5 10H12.5M2.5 12.5H9" stroke="#3a0f12" /><circle cx="15.5" cy="19" r="7.8" fill="#3f3b3c" stroke="#99908f" /><text x="15.5" y="23" textAnchor="middle" fill="#fff" stroke="none" fontSize="11">1</text></Svg>
        </button>
      </div>
      <div className="mr-1 border-l border-[#6b5557]" />
    </footer>
  );
}

export default function App() {
  return (
    <div className="flex min-h-screen flex-col overflow-x-hidden bg-white">
      <TitleBar />
      <MenuBar />
      <Toolbar />
      <div className="flex flex-1">
        <Sidebar />
        <Story />
      </div>
      <SheetTabs />
      <StatusBar />
      <Taskbar />
    </div>
  );
}
